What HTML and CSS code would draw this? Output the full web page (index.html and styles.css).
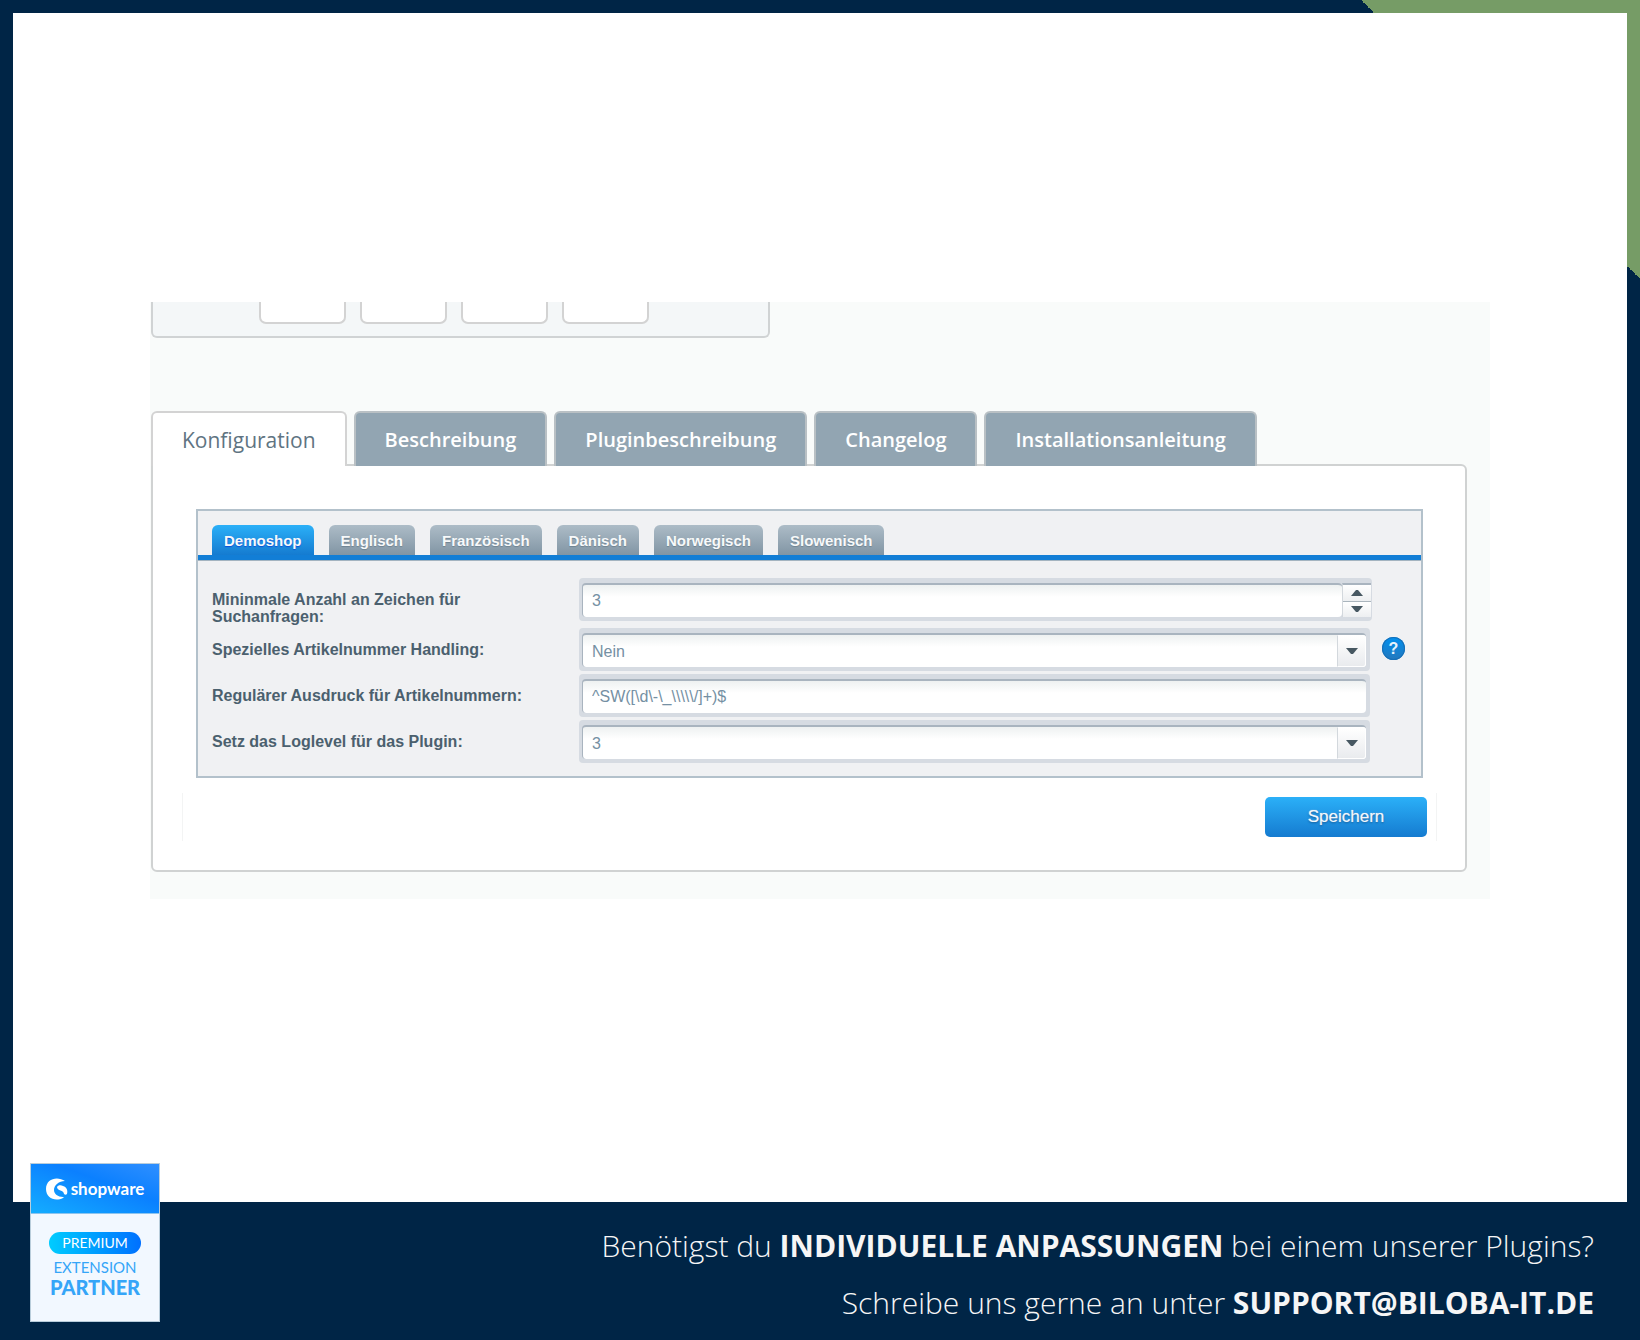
FILE: index.html
```html
<!DOCTYPE html>
<html lang="de">
<head>
<meta charset="utf-8">
<meta name="viewport" content="width=device-width, initial-scale=1">
<title>Plugin-Konfiguration</title>
<link rel="stylesheet" href="styles.css">
</head>
<body>
<div class="frame">
  <main class="stage">
    <section class="panel">
      <div class="preview">
        <span class="thumb"></span>
        <span class="thumb"></span>
        <span class="thumb"></span>
        <span class="thumb"></span>
      </div>

      <nav class="tabs">
        <button type="button" class="tab tab-active">Konfiguration</button>
        <button type="button" class="tab">Beschreibung</button>
        <button type="button" class="tab">Pluginbeschreibung</button>
        <button type="button" class="tab">Changelog</button>
        <button type="button" class="tab">Installationsanleitung</button>
      </nav>

      <form class="card">
        <div class="settings">
          <div class="shops">
            <button type="button" class="shop shop-active">Demoshop</button>
            <button type="button" class="shop">Englisch</button>
            <button type="button" class="shop">Französisch</button>
            <button type="button" class="shop">Dänisch</button>
            <button type="button" class="shop">Norwegisch</button>
            <button type="button" class="shop">Slowenisch</button>
          </div>
          <div class="rows">
            <div class="row">
              <label class="label" for="min-chars">Mininmale Anzahl an Zeichen für Suchanfragen:</label>
              <div class="control control-number">
                <input class="input" id="min-chars" type="number" value="3">
                <div class="spinner">
                  <button type="button" class="step" aria-label="Erhöhen"><svg width="12" height="6" viewBox="0 0 12 6"><path d="M0 6 5 0h2l5 6z" fill="#475862"/></svg></button>
                  <button type="button" class="step" aria-label="Verringern"><svg width="12" height="6" viewBox="0 0 12 6"><path d="M0 0 5 6h2l5-6z" fill="#475862"/></svg></button>
                </div>
              </div>
            </div>
            <div class="row">
              <label class="label" for="handling">Spezielles Artikelnummer Handling:</label>
              <div class="control">
                <select class="input" id="handling"><option>Nein</option><option>Ja</option></select>
                <span class="trigger"><svg width="12" height="6" viewBox="0 0 12 6"><path d="M0 0 5 6h2l5-6z" fill="#475862"/></svg></span>
              </div>
              <button type="button" class="help" aria-label="Hilfe">?</button>
            </div>
            <div class="row">
              <label class="label" for="regex">Regulärer Ausdruck für Artikelnummern:</label>
              <div class="control">
                <input class="input" id="regex" type="text" value="^SW([\d\-\_\\\\\/]+)$">
              </div>
            </div>
            <div class="row">
              <label class="label" for="loglevel">Setz das Loglevel für das Plugin:</label>
              <div class="control">
                <select class="input" id="loglevel"><option>3</option><option>2</option><option>1</option></select>
                <span class="trigger"><svg width="12" height="6" viewBox="0 0 12 6"><path d="M0 0 5 6h2l5-6z" fill="#475862"/></svg></span>
              </div>
            </div>
          </div>
        </div>
        <div class="toolbar">
          <button type="submit" class="save">Speichern</button>
        </div>
      </form>
    </section>
  </main>

  <footer class="footer">
    <aside class="badge">
      <div class="badge-head">
        <svg class="badge-mark" width="22" height="22" viewBox="0 0 22 22" fill="#fff"><path d="M19 3C12-2 0 0 0 11c0 9 9 13 17 9 1-1 1-1 0-1-5 0-9-3-9-7 0-5 5-9 11-9z"/><path d="M11 9c1-2 4-2 6-1 4 1 5 5 4 8-1 1-2 1-3 0 0-4-7-3-7-7z"/></svg>
        <span class="badge-brand">shopware</span>
      </div>
      <div class="badge-body">
        <span class="badge-pill">PREMIUM</span>
        <span class="badge-type">EXTENSION</span>
        <span class="badge-role">PARTNER</span>
      </div>
    </aside>
    <p class="line">Benötigst du <strong>INDIVIDUELLE ANPASSUNGEN</strong> bei einem unserer Plugins?</p>
    <p class="line">Schreibe uns gerne an unter <strong>SUPPORT@BILOBA-IT.DE</strong></p>
  </footer>
</div>
</body>
</html>
```
FILE: styles.css
```css
* {
  box-sizing: border-box;
}

body {
  margin: 0;
  font-family: "Liberation Sans", Arial, sans-serif;
}

button,
input,
select {
  margin: 0;
  padding: 0;
  border: 0;
  font: inherit;
}

.frame {
  display: flex;
  flex-direction: column;
  min-height: 100vh;
  padding: 13px 13px 0;
  background: linear-gradient(to top right, transparent 50%, #769c66 50%) right top / 279px 279px no-repeat #002546;
}

.stage {
  flex: 1;
  padding: 289px 137px 40px;
  background: #fff;
}

.panel {
  padding: 0 23px 27px 1px;
  background: #f9fbfa;
}

.preview {
  display: flex;
  gap: 14px;
  width: 619px;
  height: 36px;
  padding-left: 106px;
  border: 2px solid #d0d3d4;
  border-top: 0;
  border-radius: 0 0 6px 6px;
  background: #f4f7f8;
}

.thumb {
  width: 87px;
  height: 22px;
  border: 2px solid #d3d3d3;
  border-top: 0;
  border-radius: 0 0 7px 7px;
  background: #fff;
}

/* Main tabs overlap the card's top border */
.tabs {
  display: flex;
  gap: 7px;
  margin-top: 73px;
  margin-bottom: -2px;
}

.tab {
  position: relative;
  height: 55px;
  padding: 0 29px;
  border: 2px solid #b9c0c4;
  border-bottom: 0;
  border-radius: 6px 6px 0 0;
  background: #92a5b2;
  color: #fff;
  font-family: "Open Sans", sans-serif;
  font-size: 20px;
  font-weight: 600;
}

.tab-active {
  border-color: #d3d3d3;
  background: #fff;
  color: #5f7482;
  font-size: 21px;
  font-weight: 400;
}

.card {
  padding: 43px 28px 29px 29px;
  border: 2px solid #d0d2d2;
  border-radius: 0 6px 6px 6px;
  background: #fff;
}

.settings {
  margin: 0 14px;
  border: 2px solid #b3c1cb;
  background: #f0f1f3;
}

.shops {
  display: flex;
  gap: 15px;
  padding: 14px 14px 0;
  border-bottom: 5px solid #127ed6;
  box-shadow: 0 1px 0 #a4b4c0;
}

.shop {
  height: 30px;
  padding: 0 12px;
  border-radius: 6px 6px 0 0;
  background: linear-gradient(#adbcc7, #8195a4);
  color: #f7f9fa;
  font-size: 15px;
  font-weight: bold;
  text-shadow: 0 1px 1px #6f8391;
}

.shop-active {
  background: linear-gradient(#2bb0f8, #157bd0);
  text-shadow: 0 1px 1px #0a50d8;
}

.rows {
  display: flex;
  flex-direction: column;
  gap: 3px;
  padding: 18px 16px 13px 14px;
}

.row {
  display: grid;
  grid-template-columns: 367px 1fr 35px;
}

.label {
  max-width: 310px;
  padding-top: 13px;
  color: #4b606e;
  font-size: 16px;
  font-weight: bold;
  line-height: 17px;
}

.control {
  display: grid;
  height: 43px;
  padding: 5px 4px 4px 3px;
  border-radius: 4px;
  background: #d6dbe2;
}

.control-number {
  grid-template-columns: 1fr 29px;
  padding-right: 1px;
  margin-right: -2px;
}

.input {
  appearance: none;
  grid-area: 1 / 1;
  width: 100%;
  min-width: 0;
  padding-left: 9px;
  border: 1px solid #a9b4bf;
  border-width: 2px 0 0 1px;
  border-radius: 4px;
  background: linear-gradient(#eef1f1, #fff 12px);
  color: #7590a3;
  font-size: 16px;
}

.input::-webkit-inner-spin-button {
  appearance: none;
}

.spinner {
  display: flex;
  flex-direction: column;
  border-top: 2px solid #a9b4bf;
  border-left: 1px solid #d3d8dd;
}

.step {
  display: flex;
  flex: 1;
  align-items: center;
  justify-content: center;
  background: linear-gradient(#fff, #edeff1);
}

.step + .step {
  border-top: 1px solid #aab5bd;
}

.trigger {
  display: flex;
  grid-area: 1 / 1;
  align-items: center;
  justify-content: center;
  justify-self: end;
  width: 29px;
  margin-top: 2px;
  border: 1px solid #fff;
  border-left-color: #d3d8dd;
  border-radius: 0 3px 3px 0;
  background: linear-gradient(#fff, #e9ebee);
  pointer-events: none;
}

.help {
  justify-self: end;
  width: 23px;
  height: 23px;
  margin-top: 9px;
  border-radius: 50%;
  background: linear-gradient(#0090f0, #2478bc);
  box-shadow: inset 0 0 0 1px #1670b8;
  color: #e6f3fd;
  font-size: 16px;
  font-weight: bold;
  line-height: 23px;
}

.toolbar {
  display: flex;
  justify-content: flex-end;
  margin-top: 15px;
  padding: 4px 9px;
  border: 1px solid #f3f4f4;
  border-width: 0 1px;
}

.save {
  width: 162px;
  height: 40px;
  border-radius: 5px;
  background: linear-gradient(#2bb0f8, #157bd0);
  color: #f2f8fd;
  font-size: 17px;
  font-weight: normal;
  text-shadow: 0 1px 2px #0b5596, 0 0 1px #fff;
}

.footer {
  position: relative;
  padding: 15px 33px 9px;
  color: #f6f6f6;
  font-family: "Open Sans", sans-serif;
  font-size: 30px;
  font-weight: 300;
  line-height: 57px;
  text-align: right;
}

.line {
  margin: 0;
}

.line strong {
  font-weight: 700;
}

/* Partner badge sits over the edge between page and footer */
.badge {
  position: absolute;
  bottom: 18px;
  left: 17px;
  display: flex;
  flex-direction: column;
  width: 130px;
  height: 159px;
  border: 1px solid #b9cddb;
  background: #f2f8ff;
  font-family: Lato, sans-serif;
  line-height: 18px;
}

.badge-head {
  display: flex;
  gap: 3px;
  align-items: center;
  justify-content: center;
  height: 50px;
  border-bottom: 1px solid #8cc4ee;
  background: linear-gradient(20deg, #14adff, #0b80ff 60%, #2f8fff);
  color: #fff;
}

.badge-brand {
  font-size: 17px;
  font-weight: 700;
}

.badge-body {
  display: flex;
  flex-direction: column;
  align-items: center;
  padding-top: 18px;
  color: #35a5f8;
}

.badge-pill {
  width: 92px;
  margin-bottom: 4px;
  border-radius: 11px;
  background: linear-gradient(90deg, #00ccff, #0070ff);
  color: #fff;
  font-size: 14px;
  font-weight: 400;
  line-height: 22px;
  text-align: center;
}

.badge-type {
  font-size: 15px;
  font-weight: 400;
}

.badge-role {
  font-size: 20px;
  font-weight: 900;
  line-height: 22px;
}
```
